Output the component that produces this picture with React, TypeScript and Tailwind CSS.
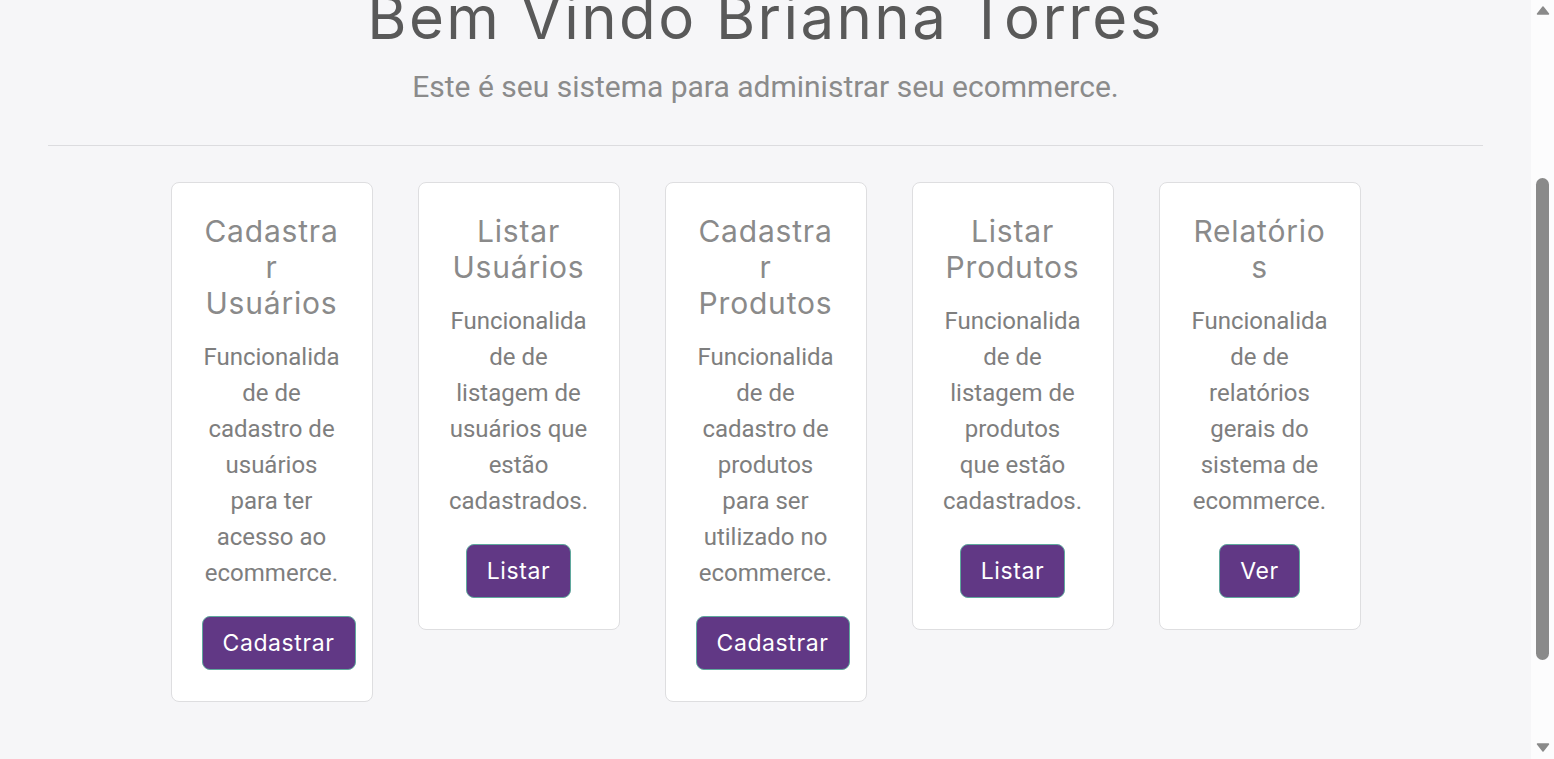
import { useLayoutEffect, useRef } from 'react'

const cards = [
  {
    title: ['Cadastra', 'r', 'Usuários'],
    text: ['Funcionalida', 'de de', 'cadastro de', 'usuários', 'para ter', 'acesso ao', 'ecommerce.'],
    action: 'Cadastrar',
  },
  {
    title: ['Listar', 'Usuários'],
    text: ['Funcionalida', 'de de', 'listagem de', 'usuários que', 'estão', 'cadastrados.'],
    action: 'Listar',
  },
  {
    title: ['Cadastra', 'r', 'Produtos'],
    text: ['Funcionalida', 'de de', 'cadastro de', 'produtos', 'para ser', 'utilizado no', 'ecommerce.'],
    action: 'Cadastrar',
  },
  {
    title: ['Listar', 'Produtos'],
    text: ['Funcionalida', 'de de', 'listagem de', 'produtos', 'que estão', 'cadastrados.'],
    action: 'Listar',
  },
  {
    title: ['Relatório', 's'],
    text: ['Funcionalida', 'de de', 'relatórios', 'gerais do', 'sistema de', 'ecommerce.'],
    action: 'Ver',
  },
]

const heading = "font-['Inter',sans-serif]"
const body = "font-['Roboto',sans-serif]"

function Card({ title, text, action }: { title: string[]; text: string[]; action: string }) {
  return (
    <div className="w-[202px] rounded-lg border border-[#dedee0] bg-white px-[30px] pt-[30px] pb-[31px] text-center">
      <h3 className={`${heading} text-[30px] leading-[36px] tracking-[0.8px] text-[#8a8a8a] whitespace-nowrap`}>
        {title.map((t, i) => (
          <span key={i} className="block">
            {t}
          </span>
        ))}
      </h3>
      <p className={`${body} mt-[18px] text-[24px] leading-[36px] text-[#7e7e7e] whitespace-nowrap`}>
        {text.map((t, i) => (
          <span key={i} className="block">
            {t}
          </span>
        ))}
      </p>
      <div className="mt-[25px]">
        <button
          className={`${heading} inline-block h-[54px] rounded-lg border border-[#5fa89d] bg-[#613885] px-[20px] text-[23px] tracking-[0.6px] text-white whitespace-nowrap`}
        >
          {action}
        </button>
      </div>
    </div>
  )
}

function Scrollbar() {
  return (
    <aside className="flex w-[23px] shrink-0 flex-col items-center bg-[#fcfcfd]">
      <svg width="14" height="10" viewBox="0 0 14 10" className="mt-[5px]">
        <path d="M1.5 9 L7 2 L12.5 9 Z" fill="#8a8a8a" stroke="#8a8a8a" strokeWidth="1.5" strokeLinejoin="round" />
      </svg>
      <div className="mt-[163px] h-[482px] w-[13px] rounded-full bg-[#8a8a8a]" />
      <div className="flex-1" />
      <svg width="14" height="10" viewBox="0 0 14 10" className="mb-[6px]">
        <path d="M1.5 1 L7 8 L12.5 1 Z" fill="#8a8a8a" stroke="#8a8a8a" strokeWidth="1.5" strokeLinejoin="round" />
      </svg>
    </aside>
  )
}

export default function App() {
  const scroller = useRef<HTMLDivElement>(null)
  const title = useRef<HTMLHeadingElement>(null)

  useLayoutEffect(() => {
    if (scroller.current && title.current) {
      scroller.current.scrollTop = title.current.offsetTop + 19
    }
  }, [])

  return (
    <div className="flex h-screen bg-[#f6f6f8]">
      <main ref={scroller} className="relative flex-1 overflow-hidden">
        <nav className="flex h-[72px] items-center bg-[#613885] px-12 text-white">
          <span className={`${heading} text-xl font-semibold`}>Ecommerce Admin</span>
        </nav>

        <div className="px-12 pt-[176px] pb-[203px]">
          <section className="text-center">
            <h1 ref={title} className={`${heading} text-[60px] leading-[72px] tracking-[2.4px] text-[#595959]`}>
              Bem Vindo Brianna Torres
            </h1>
            <p className={`${body} mt-[13px] text-[30px] leading-[42px] text-[#8b8b8b]`}>
              Este é seu sistema para administrar seu ecommerce.
            </p>
          </section>

          <hr className="mt-[37px] border-t border-[#dcdcdf]" />

          <div className="mt-[36px] flex items-start justify-center gap-[45px]">
            {cards.map((c, i) => (
              <Card key={i} {...c} />
            ))}
          </div>
        </div>
      </main>
      <Scrollbar />
    </div>
  )
}
